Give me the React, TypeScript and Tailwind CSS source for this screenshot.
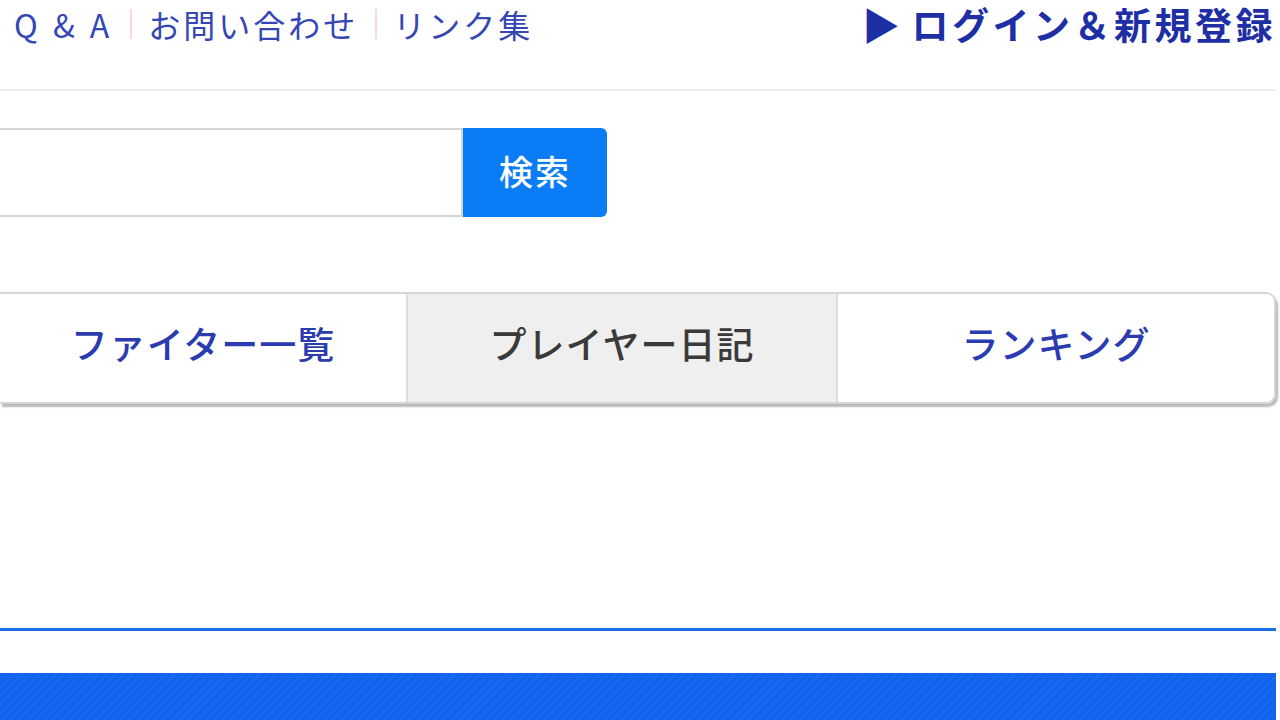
const links = ["Q & A", "お問い合わせ", "リンク集"];

const tabs = [
  { label: "ファイター一覧", active: false },
  { label: "プレイヤー日記", active: true },
  { label: "ランキング", active: false },
];

export default function App() {
  return (
    <div className="min-h-screen bg-white font-['Noto_Sans_CJK_JP','Noto_Sans',sans-serif] overflow-hidden">
      <div className="w-[1276px]">
        {/* top bar */}
        <header className="h-[48px] flex items-center justify-between">
          <nav className="flex items-center pl-[14px] text-[32px] leading-[40px] text-[#3447b5]">
            {links.map((l, i) => (
              <div key={l} className="flex items-center">
                {i > 0 && <span className="ml-[17px] mr-[16px] w-[2px] h-[30px] bg-[#f3dccf]" />}
                <a className={i === 0 ? "tracking-[4px]" : "tracking-[3px]"}>{l}</a>
              </div>
            ))}
          </nav>
          <a className="flex items-center text-[37px] leading-[46px] font-bold text-[#1e2fa6] tracking-[3.5px]">
            <span className="text-[38px] mr-[8px]">▶</span>
            <span>ログイン＆新規登録</span>
          </a>
        </header>
        <div className="mt-[41px] h-[2px] bg-[#eeeeee]" />

        {/* search */}
        <form className="mt-[37px] flex h-[89px]">
          <input
            type="text"
            className="w-[463px] h-full border-2 border-l-0 border-[#d4d4d4] outline-none"
          />
          <button
            type="button"
            className="w-[144px] h-full pb-[4px] bg-[#0a7cf6] text-white text-[34px] font-medium tracking-[2px] rounded-r-[6px]"
          >
            検索
          </button>
        </form>

        {/* tabs */}
        <div className="mt-[75px] h-[112px] flex border-2 border-l-0 border-[#d6d6d6] rounded-r-[10px] shadow-[2px_3px_2px_rgba(0,0,0,0.28)] overflow-hidden">
          {tabs.map((t, i) => (
            <div
              key={t.label}
              className={
                "flex items-center justify-center pb-[8px] text-[37px] font-medium tracking-[1px] " +
                (i === 0 ? "w-[408px] " : i === 1 ? "w-[430px] " : "flex-1 ") +
                (i < 2 ? "border-r-2 border-[#dcdcdc] " : "") +
                (t.active ? "bg-[#efefef] text-[#3a3a3a]" : "bg-white text-[#2b3cb0]")
              }
            >
              {t.label}
            </div>
          ))}
        </div>

        <div className="mt-[224px] h-[3px] bg-[#1a6fe3]" />
        <div className="mt-[42px] h-[60px] bg-[repeating-linear-gradient(135deg,#0f63ee_0px,#0f63ee_3px,#1768f0_3px,#1768f0_6px)]" />
      </div>
    </div>
  );
}
